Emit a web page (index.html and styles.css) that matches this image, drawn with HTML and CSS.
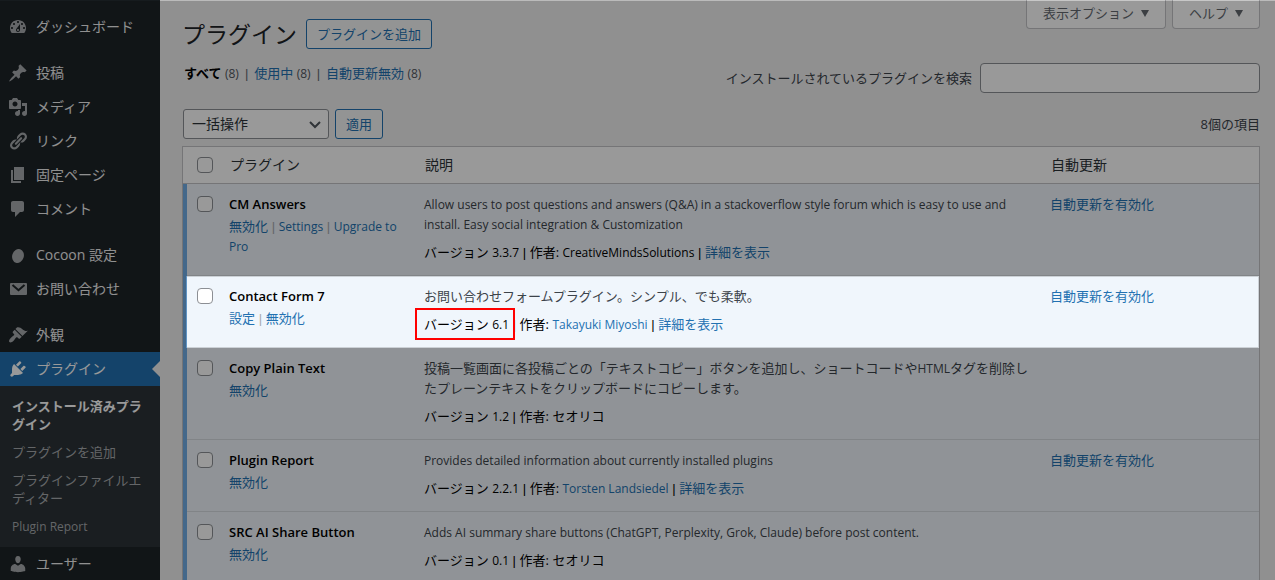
FILE: index.html
```html
<!DOCTYPE html>
<html lang="ja">
<head>
<meta charset="utf-8">
<title>プラグイン</title>
<link rel="stylesheet" href="styles.css">
</head>
<body>
<div class="app">
  <nav class="sidebar">
    <ul class="menu">
      <li><a class="menu-item" href="#"><svg class="icon" viewBox="0 0 20 20"><path d="M3.76 16h12.48c1.1-1.37 1.76-3.11 1.76-5 0-4.42-3.58-8-8-8s-8 3.58-8 8c0 1.89.66 3.63 1.76 5zM10 4c.55 0 1 .45 1 1s-.45 1-1 1-1-.45-1-1 .45-1 1-1zM6 6c.55 0 1 .45 1 1s-.45 1-1 1-1-.45-1-1 .45-1 1-1zm8 0c.55 0 1 .45 1 1s-.45 1-1 1-1-.45-1-1 .45-1 1-1zm-5.37 5.55L12 7v6c0 1.1-.9 2-2 2s-2-.9-2-2c0-.57.24-1.08.63-1.45zM4 10c.55 0 1 .45 1 1s-.45 1-1 1-1-.45-1-1 .45-1 1-1zm12 0c.55 0 1 .45 1 1s-.45 1-1 1-1-.45-1-1 .45-1 1-1zm-5 3c0-.55-.45-1-1-1s-1 .45-1 1 .45 1 1 1 1-.45 1-1z" fill-rule="evenodd"/></svg>ダッシュボード</a></li>
      <li class="group"><a class="menu-item" href="#"><svg class="icon" viewBox="0 0 20 20"><path d="M10.44 3.02l1.82-1.82 6.36 6.35-1.83 1.82c-1.05-.68-2.48-.57-3.41.36l-.75.75c-.92.93-1.04 2.35-.35 3.41l-1.83 1.82-2.41-2.41-2.8 2.79c-.42.42-3.38 2.71-3.8 2.29s1.86-3.39 2.28-3.81l2.79-2.79L4.1 9.36l1.83-1.82c1.05.69 2.48.57 3.4-.36l.75-.75c.93-.92 1.05-2.35.36-3.41z"/></svg>投稿</a></li>
      <li><a class="menu-item" href="#"><svg class="icon" viewBox="0 0 20 20"><path d="M13 11V4c0-.55-.45-1-1-1h-1.67L9 1H5L3.67 3H2c-.55 0-1 .45-1 1v7c0 .55.45 1 1 1h10c.55 0 1-.45 1-1zM7 4.5c1.38 0 2.5 1.12 2.5 2.5S8.38 9.5 7 9.5 4.5 8.38 4.5 7 5.62 4.5 7 4.5zM14 6h5v10.5c0 1.38-1.12 2.5-2.5 2.5S14 17.88 14 16.5s1.12-2.5 2.5-2.5c.17 0 .34.02.5.05V9h-3V6zm-4 8.05V13h2v3.5c0 1.38-1.12 2.5-2.5 2.5S7 17.88 7 16.5 8.12 14 9.5 14c.17 0 .34.02.5.05z" fill-rule="evenodd"/></svg>メディア</a></li>
      <li><a class="menu-item" href="#"><svg class="icon" viewBox="0 0 20 20"><path d="M17.74 2.76c1.68 1.69 1.68 4.41 0 6.1l-1.53 1.52c-1.12 1.12-2.7 1.47-4.14 1.09l2.62-2.61.76-.77.76-.76c.84-.84.84-2.2 0-3.04-.84-.85-2.2-.85-3.04 0l-.77.76-3.38 3.38c-.37-1.44-.02-3.02 1.1-4.14l1.52-1.53c1.69-1.68 4.42-1.68 6.1 0zM8.59 13.43l5.34-5.34c.42-.42.42-1.1 0-1.52-.44-.43-1.13-.39-1.53 0l-5.33 5.34c-.42.42-.42 1.1 0 1.52.44.43 1.13.39 1.52 0zm-.76 2.29l4.14-4.15c.38 1.44.03 3.02-1.09 4.14l-1.52 1.53c-1.69 1.68-4.41 1.68-6.1 0-1.68-1.68-1.68-4.42 0-6.1l1.53-1.52c1.12-1.12 2.7-1.47 4.14-1.1l-4.14 4.15c-.85.84-.85 2.2 0 3.05.84.84 2.2.84 3.04 0z"/></svg>リンク</a></li>
      <li><a class="menu-item" href="#"><svg class="icon" viewBox="0 0 20 20"><path d="M6 15V2h10v13H6zm-1 1h8v2H3V5h2v11z"/></svg>固定ページ</a></li>
      <li><a class="menu-item" href="#"><svg class="icon" viewBox="0 0 20 20"><path d="M5 2h9c1.1 0 2 .9 2 2v7c0 1.1-.9 2-2 2h-2l-5 5v-5H5c-1.1 0-2-.9-2-2V4c0-1.1.9-2 2-2z"/></svg>コメント</a></li>
      <li class="group"><a class="menu-item" href="#"><svg class="icon" viewBox="0 0 20 20"><ellipse cx="10" cy="11" rx="5.8" ry="7" transform="rotate(18 10 11)"/></svg>Cocoon 設定</a></li>
      <li><a class="menu-item" href="#"><svg class="icon" viewBox="0 0 20 20"><rect x="2" y="4" width="17" height="12" rx="1"/><path class="flap" d="M4.5 6l6 5.2 6-5.2"/></svg>お問い合わせ</a></li>
      <li class="group"><a class="menu-item" href="#"><svg class="icon" viewBox="0 0 20 20"><path d="M14.48 11.06L7.41 3.99l1.5-1.5c.5-.56 2.3-.47 3.51.32 1.21.8 1.43 1.28 2.91 2.1 1.18.64 2.45 1.26 4.45.85zm-.71.71L6.7 4.7 4.93 6.47c-.39.39-.39 1.02 0 1.41l1.06 1.06c.39.39.39 1.03 0 1.42-.6.6-1.43 1.11-2.21 1.69-.35.26-.7.53-1.01.84C1.43 14.23.4 16.08 1.4 17.07c.99 1 2.84-.03 4.18-1.36.31-.31.58-.66.85-1.02.57-.78 1.08-1.61 1.69-2.21.39-.39 1.02-.39 1.41 0l1.06 1.06c.39.39 1.02.39 1.41 0z"/></svg>外観</a></li>
      <li>
        <a class="menu-item current" href="#"><svg class="icon" viewBox="0 0 20 20"><path d="M13.11 4.36L9.87 7.6 8 5.73l3.24-3.24c.35-.34 1.05-.2 1.56.32.52.51.66 1.21.31 1.55zm-8 1.77l.91-1.12 9.01 9.01-1.19.84c-.71.71-2.63 1.16-3.82 1.16H6.14L4.9 17.26c-.59.59-1.54.59-2.12 0-.59-.58-.59-1.53 0-2.12l1.24-1.24v-3.88c0-1.13.4-3.19 1.09-3.89zm7.26 3.97l3.24-3.24c.34-.35 1.04-.21 1.55.31.52.51.66 1.21.31 1.55l-3.24 3.25z"/></svg>プラグイン</a>
        <ul class="submenu">
          <li><a class="submenu-item active" href="#">インストール済みプラグイン</a></li>
          <li><a class="submenu-item" href="#">プラグインを追加</a></li>
          <li><a class="submenu-item" href="#">プラグインファイルエディター</a></li>
          <li><a class="submenu-item" href="#"><span class="latin">Plugin Report</span></a></li>
        </ul>
      </li>
      <li><a class="menu-item" href="#"><svg class="icon" viewBox="0 0 20 20"><path d="M10 9.25c-2.27 0-2.73-3.44-2.73-3.44C7 4.02 7.82 2 9.97 2c2.16 0 2.98 2.02 2.71 3.81 0 0-.41 3.44-2.68 3.44zm0 2.57L12.72 10c2.39 0 4.52 2.33 4.52 4.53v2.49s-3.65 1.13-7.24 1.13c-3.65 0-7.24-1.13-7.24-1.13v-2.49c0-2.25 1.94-4.48 4.47-4.48z"/></svg>ユーザー</a></li>
    </ul>
  </nav>

  <main class="content">
    <header class="top">
      <div class="top-left">
        <div class="title-row">
          <h1 class="title">プラグイン</h1>
          <a class="button" href="#">プラグインを追加</a>
        </div>
        <ul class="filters">
          <li><a class="filter-current" href="#">すべて</a> <span class="latin count">(8)</span></li>
          <li><a href="#">使用中</a> <span class="latin count">(8)</span></li>
          <li><a href="#">自動更新無効</a> <span class="latin count">(8)</span></li>
        </ul>
      </div>
      <div class="top-right">
        <div class="screen-tabs">
          <button class="screen-tab" type="button">表示オプション<svg class="caret" viewBox="0 0 8 8"><path d="M0 1h8L4 8z"/></svg></button>
          <button class="screen-tab" type="button">ヘルプ<svg class="caret" viewBox="0 0 8 8"><path d="M0 1h8L4 8z"/></svg></button>
        </div>
        <div class="search">
          <label for="plugin-search">インストールされているプラグインを検索</label>
          <input class="search-input" id="plugin-search" type="search">
        </div>
      </div>
    </header>

    <div class="toolbar">
      <div class="select-wrap">
        <select class="select" aria-label="一括操作を選択"><option>一括操作</option></select>
        <svg class="chevron" viewBox="0 0 12 8"><path d="M1 1l5 5 5-5"/></svg>
      </div>
      <button class="button" type="button">適用</button>
      <span class="total">8個の項目</span>
    </div>

    <table class="plugins">
      <colgroup><col class="col-check"><col class="col-name"><col><col class="col-auto"></colgroup>
      <thead>
        <tr>
          <th class="check"><input class="box" type="checkbox" aria-label="すべて選択"></th>
          <th>プラグイン</th><th>説明</th><th>自動更新</th>
        </tr>
      </thead>
      <tbody>
        <tr>
          <td class="check"><input class="box" type="checkbox" aria-label="CM Answers を選択"></td>
          <td><strong class="name">CM Answers</strong><div class="actions"><a href="#">無効化</a><span class="sep"> | </span><a class="latin" href="#">Settings</a><span class="sep"> | </span><a class="latin" href="#">Upgrade to Pro</a></div></td>
          <td><p class="desc"><span class="latin">Allow users to post questions and answers (Q&amp;A) in a stackoverflow style forum which is easy to use and install. Easy social integration &amp; Customization</span></p><p class="meta">バージョン <span class="latin">3.3.7</span><span class="sep"> | </span>作者: <span class="latin">CreativeMindsSolutions</span><span class="sep"> | </span><a href="#">詳細を表示</a></p></td>
          <td><a href="#">自動更新を有効化</a></td>
        </tr>
        <tr class="focus">
          <td class="check"><input class="box" type="checkbox" aria-label="Contact Form 7 を選択"><div class="spotlight"></div></td>
          <td><strong class="name">Contact Form 7</strong><div class="actions"><a href="#">設定</a><span class="sep"> | </span><a href="#">無効化</a></div></td>
          <td><p class="desc">お問い合わせフォームプラグイン。シンプル、でも柔軟。</p><p class="meta"><span class="version">バージョン <span class="latin">6.1</span></span><span class="sep"> | </span>作者: <a class="latin" href="#">Takayuki Miyoshi</a><span class="sep"> | </span><a href="#">詳細を表示</a></p></td>
          <td><a href="#">自動更新を有効化</a></td>
        </tr>
        <tr>
          <td class="check"><input class="box" type="checkbox" aria-label="Copy Plain Text を選択"></td>
          <td><strong class="name">Copy Plain Text</strong><div class="actions"><a href="#">無効化</a></div></td>
          <td><p class="desc">投稿一覧画面に各投稿ごとの「テキストコピー」ボタンを追加し、ショートコードや<span class="latin">HTML</span>タグを削除したプレーンテキストをクリップボードにコピーします。</p><p class="meta">バージョン <span class="latin">1.2</span><span class="sep"> | </span>作者: セオリコ</p></td>
          <td></td>
        </tr>
        <tr>
          <td class="check"><input class="box" type="checkbox" aria-label="Plugin Report を選択"></td>
          <td><strong class="name">Plugin Report</strong><div class="actions"><a href="#">無効化</a></div></td>
          <td><p class="desc"><span class="latin">Provides detailed information about currently installed plugins</span></p><p class="meta">バージョン <span class="latin">2.2.1</span><span class="sep"> | </span>作者: <a class="latin" href="#">Torsten Landsiedel</a><span class="sep"> | </span><a href="#">詳細を表示</a></p></td>
          <td><a href="#">自動更新を有効化</a></td>
        </tr>
        <tr>
          <td class="check"><input class="box" type="checkbox" aria-label="SRC AI Share Button を選択"></td>
          <td><strong class="name">SRC AI Share Button</strong><div class="actions"><a href="#">無効化</a></div></td>
          <td><p class="desc"><span class="latin">Adds AI summary share buttons (ChatGPT, Perplexity, Grok, Claude) before post content.</span></p><p class="meta">バージョン <span class="latin">0.1</span><span class="sep"> | </span>作者: セオリコ</p></td>
          <td></td>
        </tr>
      </tbody>
    </table>
  </main>
  <div class="top-edge"></div>
</div>
</body>
</html>
```
FILE: styles.css
```css
* { box-sizing: border-box; }

body {
  margin: 0;
  background: #f0f0f1;
  color: #3c434a;
  font: 13px/20px "Open Sans", "Noto Sans CJK JP", sans-serif;
}

ul { margin: 0; padding: 0; list-style: none; }
p { margin: 0; }
a { color: #2271b1; text-decoration: none; }
.latin { font-size: 12px; line-height: 1; }
.sep { font-family: "Liberation Sans", sans-serif; line-height: 1; }

.app {
  position: relative;
  display: flex;
  height: 100vh;
  overflow: hidden;
}

/* Sidebar */
.sidebar {
  flex: 0 0 160px;
  padding-top: 10px;
  background: #1d2327;
}
.group { margin-top: 12px; }
.menu-item {
  position: relative;
  display: flex;
  align-items: center;
  gap: 8px;
  height: 34px;
  padding-left: 8px;
  color: #f0f0f1;
  font-size: 14px;
}
.icon { width: 20px; height: 20px; fill: #a7aaad; }
.flap { fill: none; stroke: #1d2327; stroke-width: 2; }
.current { background: #2271b1; color: #fff; }
.current .icon { fill: #fff; }
.current::after {
  content: "";
  position: absolute;
  right: 0;
  top: 9px;
  border: 8px solid transparent;
  border-left-width: 0;
  border-right-color: #f0f0f1;
}
.submenu { padding: 6px 0 7px; background: #2c3338; }
.submenu-item {
  display: block;
  padding: 5px 12px;
  color: #a7aaad;
  line-height: 18px;
}
.submenu-item.active { color: #fff; font-weight: 700; }

/* Content header */
.content { flex: 1; min-width: 0; padding: 0 15px 0 22px; }
.top { display: flex; justify-content: space-between; }
.top-left { padding-top: 19px; }
.title-row { display: flex; align-items: center; gap: 9px; }
.title { margin: 0; color: #1d2327; font-size: 23px; font-weight: 400; line-height: 30px; }
.button {
  height: 30px;
  padding: 0 10px;
  border: 1px solid #2271b1;
  border-radius: 3px;
  background: #f6f7f7;
  color: #2271b1;
  font: inherit;
  line-height: 28px;
}
.filters { display: flex; margin-top: 14px; padding-left: 2px; }
.filters li + li::before {
  content: "|";
  padding: 0 6px;
  color: #646970;
  font-family: "Liberation Sans", sans-serif;
  line-height: 1;
}
.filter-current { color: #000; font-weight: 700; }
.count { color: #50575e; }
.screen-tabs { display: flex; justify-content: flex-end; gap: 6px; }
.screen-tab {
  display: flex;
  align-items: center;
  gap: 7px;
  height: 29px;
  padding: 0 16px 2px;
  border: 1px solid #c3c4c7;
  border-top: 0;
  border-radius: 0 0 4px 4px;
  background: #fff;
  color: #646970;
  font: inherit;
}
.caret { width: 8px; height: 8px; fill: #646970; }
.search { display: flex; align-items: center; gap: 8px; margin-top: 34px; }
.search-input {
  width: 280px;
  height: 30px;
  border: 1px solid #8c8f94;
  border-radius: 4px;
  background: #fff;
  font: inherit;
}

/* Bulk action bar */
.toolbar { display: flex; align-items: center; gap: 6px; margin-top: 16px; padding-left: 1px; }
.select-wrap { position: relative; }
.select {
  width: 146px;
  height: 30px;
  padding: 0 24px 0 8px;
  border: 1px solid #8c8f94;
  border-radius: 3px;
  background: #fff;
  color: #2c3338;
  font: inherit;
  font-size: 14px;
  appearance: none;
}
.chevron {
  position: absolute;
  right: 8px;
  top: 12px;
  width: 12px;
  height: 8px;
  fill: none;
  stroke: #50575e;
  stroke-width: 2;
  pointer-events: none;
}
.total { margin-left: auto; }

/* Plugin table */
.plugins {
  width: 100%;
  margin-top: 7px;
  border: 1px solid #c3c4c7;
  border-spacing: 0;
  table-layout: fixed;
  background: #fff;
}
.col-check { width: 36px; }
.col-name { width: 195px; }
.col-auto { width: 219px; }
th {
  height: 37px;
  padding: 0 10px 1px 11px;
  border-bottom: 1px solid #c3c4c7;
  color: #2c3338;
  font-size: 14px;
  font-weight: 400;
  text-align: left;
}
td {
  padding: 10px 10px 14px;
  background: #f0f6fc;
  box-shadow: inset 0 -1px 0 rgba(0, 0, 0, 0.1);
  vertical-align: top;
}
.check { padding-left: 14px; padding-right: 0; }
td.check { padding-left: 10px; border-left: 4px solid #72aee6; }
.box {
  display: block;
  width: 16px;
  height: 16px;
  margin: 2px 0;
  border: 1px solid #8c8f94;
  border-radius: 4px;
  background: #fff;
  appearance: none;
}
.name { display: block; color: #000; font-weight: 600; }
.actions { color: #a7aaad; margin-top: 2px; }
.desc + .meta { margin-top: 8px; }
.meta { color: #000; }

/* Dimmed page with one row left bright */
.focus { position: relative; }
.focus td { box-shadow: none; }
.spotlight {
  position: absolute;
  z-index: 10;
  inset: 0 0 0 3px;
  border: 1px solid rgba(0, 0, 0, 0.15);
  box-shadow: 0 0 0 2000px rgba(0, 0, 0, 0.4);
  pointer-events: none;
}
.version { position: relative; }
.version::after {
  content: "";
  position: absolute;
  z-index: 11;
  inset: -7px -6px -7px -9px;
  border: 2px solid #f00;
}
.top-edge {
  position: absolute;
  z-index: 12;
  inset: 0 0 auto;
  height: 1px;
  backdrop-filter: brightness(1.3);
}
```
